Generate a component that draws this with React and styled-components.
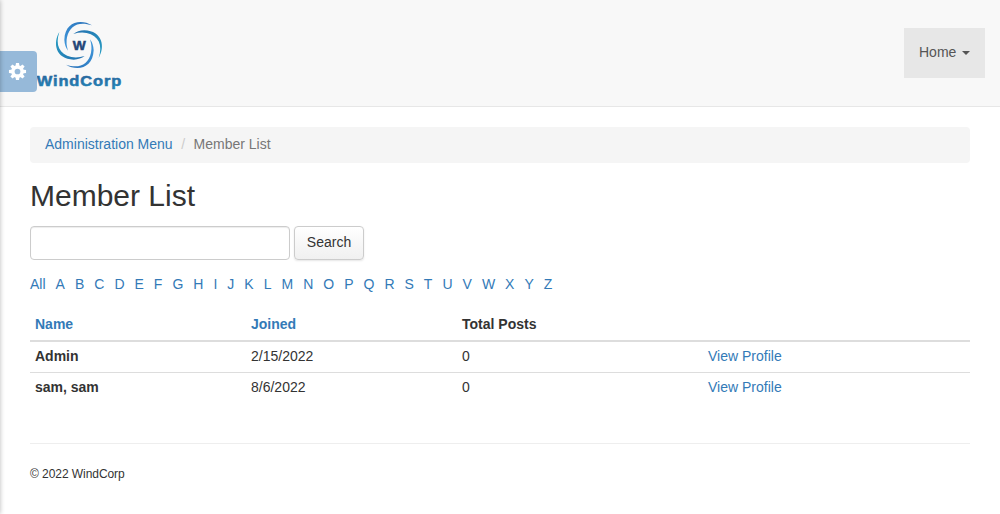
import React from "react";
import styled, { createGlobalStyle } from "styled-components";

const GlobalStyle = createGlobalStyle`
  * { box-sizing: border-box; }
  body {
    margin: 0;
    background: #fff;
    color: #333;
    font: 14px/20px "Helvetica Neue", Helvetica, "Liberation Sans", Arial, sans-serif;
  }
`;

const Page = styled.div`
  position: relative;
  min-height: 514px;
  overflow: hidden;
`;

const EdgeShadow = styled.div`
  position: absolute;
  top: 0;
  bottom: 0;
  left: -10px;
  width: 10px;
  box-shadow: 0 0 5px rgba(0, 0, 0, 0.28);
`;

const SettingsTab = styled.button`
  position: absolute;
  top: 51px;
  left: 0;
  width: 37px;
  height: 41px;
  padding: 0 0 0 8px;
  border: 0;
  border-radius: 0 4px 4px 0;
  background: #96b9d9;
  display: flex;
  align-items: center;
`;

const Header = styled.header`
  height: 107px;
  padding: 16px 15px 0 30px;
  display: flex;
  justify-content: space-between;
  background: #f8f8f8;
  border-bottom: 1px solid #e7e7e7;
`;

const LogoArt = styled.svg`
  display: block;
  width: 100px;
  height: 80px;
`;

const NavItem = styled.a`
  height: 50px;
  width: 81px;
  margin-top: 12px;
  padding: 14px 15px 16px;
  display: flex;
  align-items: center;
  justify-content: space-between;
  background: #e7e7e7;
  color: #555;
`;

const Caret = styled.span`
  margin-top: 2px;
  border-top: 4px solid #555;
  border-left: 4px solid transparent;
  border-right: 4px solid transparent;
`;

const Main = styled.main`
  padding: 20px 30px 0;
`;

const Breadcrumb = styled.nav`
  height: 36px;
  padding: 7px 15px 9px;
  border-radius: 4px;
  background: #f5f5f5;
  color: #777;
`;

const Divider = styled.span`
  padding: 0 8.5px;
  color: #ccc;
`;

const Link = styled.a`
  color: #337ab7;
`;

const Title = styled.h1`
  margin: 16px 0 14px;
  font-size: 30px;
  line-height: 33px;
  font-weight: 400;
`;

const SearchForm = styled.div`
  display: flex;
  gap: 4px;
`;

const SearchInput = styled.input`
  width: 260px;
  height: 34px;
  padding: 6px 12px;
  border: 1px solid #ccc;
  border-radius: 4px;
  background: #fff;
  box-shadow: inset 0 1px 1px rgba(0, 0, 0, 0.075);
`;

const SearchButton = styled.button`
  width: 70px;
  height: 34px;
  padding: 0 0 2px;
  border: 1px solid #ccc;
  border-radius: 4px;
  background: linear-gradient(#fff, #f0f0f0);
  box-shadow: 0 1px 2px rgba(0, 0, 0, 0.1);
  color: #333;
  font: inherit;
`;

const Letters = styled.div`
  display: flex;
  gap: 10px;
  margin-top: 14px;
`;

const Table = styled.table`
  width: 100%;
  margin-top: 15px;
  table-layout: fixed;
  border-collapse: collapse;
`;

const HeadCell = styled.th`
  width: ${(p) => p.$width || "auto"};
  height: 32px;
  padding: 5px 5px 6px;
  text-align: left;
  vertical-align: top;
  border-bottom: 2px solid #ddd;
`;

const Cell = styled.td`
  height: 31px;
  padding: 4px 5px 6px;
  vertical-align: top;
  border-top: 1px solid #ddd;
  font-weight: ${(p) => (p.$bold ? 700 : 400)};
`;

const Footer = styled.footer`
  margin-top: 39px;
  padding-top: 20px;
  border-top: 1px solid #eee;
  font-size: 12px;
  letter-spacing: -0.06px;
`;

const BLADE =
  "M178 66 C158 99 166 147 221 149 Q241 148 254 138 Q232 145 214 141 C178 133 165 105 178 66Z";

function Logo() {
  return (
    <LogoArt viewBox="90 18 300 240" role="img" aria-label="WindCorp">
      <defs>
        <linearGradient id="blade" x1="0" y1="0" x2="1" y2="1">
          <stop offset="0" stopColor="#28a0c4" />
          <stop offset="1" stopColor="#246faf" />
        </linearGradient>
        <linearGradient id="bladeAlt" x1="0" y1="0" x2="1" y2="1">
          <stop offset="0" stopColor="#2770b8" />
          <stop offset="1" stopColor="#4299dc" />
        </linearGradient>
        <linearGradient id="word" x1="0" y1="0" x2="0" y2="1">
          <stop offset="0" stopColor="#2a6299" />
          <stop offset="1" stopColor="#2385b8" />
        </linearGradient>
      </defs>
      {[0, 90, 180, 270].map((angle) => (
        <path
          key={angle}
          d={BLADE}
          fill={angle % 180 ? "url(#bladeAlt)" : "url(#blade)"}
          transform={`rotate(${angle} 237 105)`}
        />
      ))}
      <text x="218" y="119" textLength="39" lengthAdjust="spacingAndGlyphs"
        fontFamily="Liberation Sans" fontWeight="700" fontSize="38"
        fill="#244678" stroke="#244678" strokeWidth="1.5">W</text>
      <text x="110" y="228" textLength="257" lengthAdjust="spacingAndGlyphs"
        letterSpacing="2.5"
        fontFamily="Liberation Sans" fontWeight="700" fontSize="44"
        fill="url(#word)" stroke="url(#word)" strokeWidth="1.6">WindCorp</text>
    </LogoArt>
  );
}

function Gear() {
  return (
    <svg width="19" height="19" viewBox="0 0 20 20" aria-hidden="true">
      <g fill="#fff">
        {[0, 45, 90, 135].map((angle) => (
          <path key={angle} d="M8.4 1h3.2l.6 4v10l-.6 4H8.4l-.6-4V5z"
            transform={`rotate(${angle} 10 10)`} />
        ))}
        <circle cx="10" cy="10" r="6.6" />
      </g>
      <circle cx="10" cy="10" r="3" fill="#96b9d9" />
    </svg>
  );
}

const MEMBERS = [
  { name: "Admin", joined: "2/15/2022", posts: 0 },
  { name: "sam, sam", joined: "8/6/2022", posts: 0 },
];

export default function App() {
  return (
    <Page>
      <GlobalStyle />
      <Header>
        <Logo />
        <NavItem>Home<Caret /></NavItem>
      </Header>
      <Main>
        <Breadcrumb>
          <Link>Administration Menu</Link>
          <Divider>/</Divider>
          <span>Member List</span>
        </Breadcrumb>
        <Title>Member List</Title>
        <SearchForm>
          <SearchInput aria-label="Search members" />
          <SearchButton>Search</SearchButton>
        </SearchForm>
        <Letters>
          {["All", ..."ABCDEFGHIJKLMNOPQRSTUVWXYZ"].map((l) => (
            <Link key={l}>{l}</Link>
          ))}
        </Letters>
        <Table>
          <thead>
            <tr>
              <HeadCell $width="216px"><Link>Name</Link></HeadCell>
              <HeadCell $width="211px"><Link>Joined</Link></HeadCell>
              <HeadCell $width="246px">Total Posts</HeadCell>
              <HeadCell />
            </tr>
          </thead>
          <tbody>
            {MEMBERS.map((m) => (
              <tr key={m.name}>
                <Cell $bold>{m.name}</Cell>
                <Cell>{m.joined}</Cell>
                <Cell>{m.posts}</Cell>
                <Cell><Link>View Profile</Link></Cell>
              </tr>
            ))}
          </tbody>
        </Table>
        <Footer>© 2022 WindCorp</Footer>
      </Main>
      <SettingsTab aria-label="Settings"><Gear /></SettingsTab>
      <EdgeShadow />
    </Page>
  );
}
